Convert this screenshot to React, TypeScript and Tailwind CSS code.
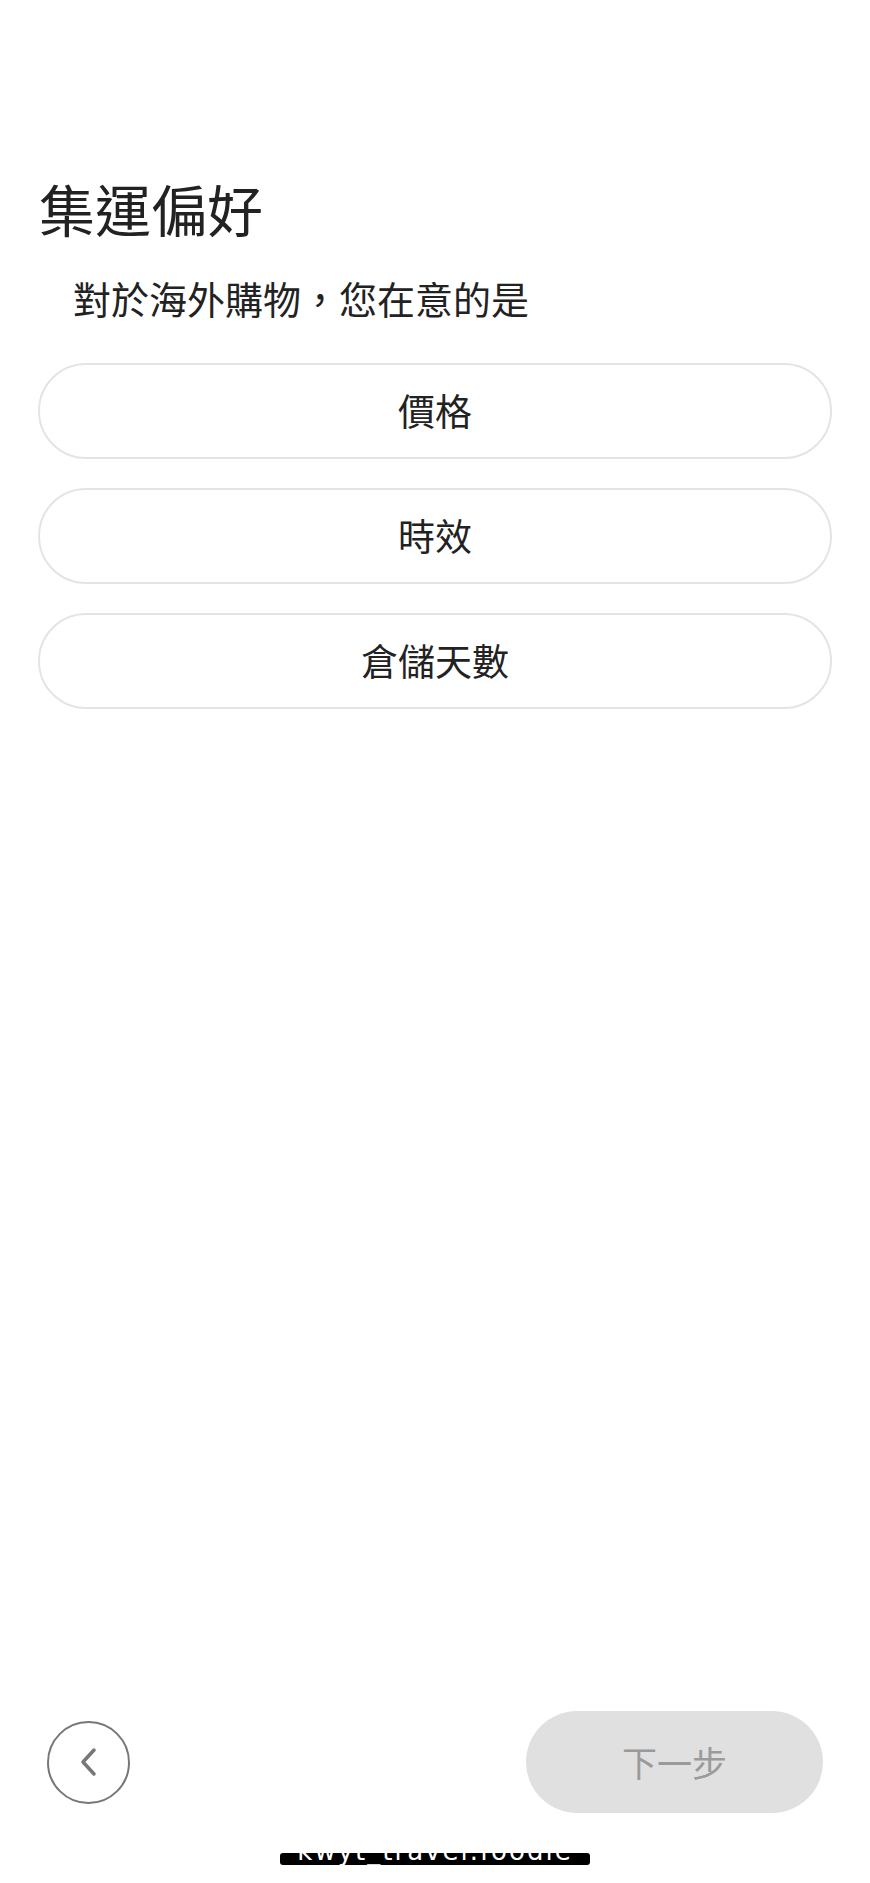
const options = ["價格", "時效", "倉儲天數"];

export default function App() {
  return (
    <div
      className="min-h-[1883px] bg-white flex flex-col text-[#222]"
      style={{ fontFamily: '"Noto Sans CJK TC", "Noto Sans", sans-serif' }}
    >
      <main className="px-[38px] pt-[176px]">
        <h1 className="text-[56px] leading-[64px] font-normal pl-[1px]">集運偏好</h1>
        <p className="text-[38px] leading-[44px] pl-[35px] mt-[36px]">對於海外購物，您在意的是</p>

        <div className="mt-[43px] flex flex-col gap-[29px]">
          {options.map((label) => (
            <button
              key={label}
              className="h-[96px] w-full rounded-full border-2 border-[#e4e4e4] bg-white text-[37px] text-[#222]"
            >
              {label}
            </button>
          ))}
        </div>
      </main>

      <div className="flex-1" />

      <footer className="flex items-center justify-between px-[47px]">
        <button className="w-[83px] h-[83px] rounded-full border-2 border-[#777] flex items-center justify-center">
          <svg width="20" height="30" viewBox="0 0 20 30" fill="none">
            <polyline
              points="15,3 4,15 15,27"
              stroke="#777"
              strokeWidth="3.5"
              strokeLinecap="round"
              strokeLinejoin="round"
            />
          </svg>
        </button>
        <button className="w-[297px] h-[102px] rounded-full bg-[#e0e0e0] text-[35px] text-[#9a9a9a]">
          下一步
        </button>
      </footer>

      <div className="flex justify-center mt-[40px] mb-[18px]">
        <div className="w-[310px] h-[12px] bg-black rounded-[3px] overflow-hidden flex justify-center">
          <span
            className="text-white text-[26px] leading-[26px] -mt-[15px] tracking-[2px] whitespace-nowrap"
            style={{ fontFamily: '"DejaVu Sans", sans-serif' }}
          >
            kwyt_travel.foodie
          </span>
        </div>
      </div>
    </div>
  );
}
